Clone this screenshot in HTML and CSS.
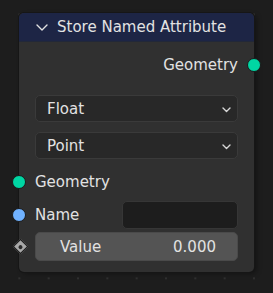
FILE: index.html
```html
<!DOCTYPE html>
<html lang="en">
<head>
    <meta charset="UTF-8">
    <meta name="viewport" content="width=device-width, initial-scale=1.0">
    <title>Store Named Attribute</title>
    <link rel="stylesheet" href="styles.css">
</head>
<body>
    <div class="node">
        <!-- 标题栏 -->
        <div class="node-header">
            <svg class="collapse-icon" viewBox="0 0 12 7" fill="none" stroke="currentColor" stroke-width="1.4" stroke-linecap="round" stroke-linejoin="round">
                <polyline points="1,1 6,6 11,1"></polyline>
            </svg>
            <span>Store Named Attribute</span>
        </div>

        <div class="node-body">
            <!-- 输出 -->
            <div class="row row-output">
                <span>Geometry</span>
                <span class="socket socket-geo socket-out"></span>
            </div>

            <!-- 下拉选项 -->
            <div class="dropdown">
                <span>Float</span>
                <svg class="drop-icon" viewBox="0 0 9 6" fill="none" stroke="currentColor" stroke-width="1.4" stroke-linecap="round" stroke-linejoin="round">
                    <polyline points="1,1 4.5,4.5 8,1"></polyline>
                </svg>
            </div>
            <div class="dropdown dropdown-second">
                <span>Point</span>
                <svg class="drop-icon" viewBox="0 0 9 6" fill="none" stroke="currentColor" stroke-width="1.4" stroke-linecap="round" stroke-linejoin="round">
                    <polyline points="1,1 4.5,4.5 8,1"></polyline>
                </svg>
            </div>

            <!-- 输入 -->
            <div class="row row-input">
                <span class="socket socket-geo socket-in"></span>
                <span>Geometry</span>
            </div>
            <div class="row row-name">
                <span class="socket socket-string socket-in"></span>
                <span class="name-label">Name</span>
                <div class="text-field"></div>
            </div>
            <div class="row row-value">
                <span class="socket-diamond"></span>
                <div class="slider">
                    <span>Value</span>
                    <span>0.000</span>
                </div>
            </div>
        </div>
    </div>
</body>
</html>
```

FILE: styles.css
```css
body {
    margin: 0;
    padding: 13px 0 0 19px;
    height: 293px;
    box-sizing: border-box;
    background-color: #1d1d1d;
    background-image: radial-gradient(circle, #303030 0.9px, transparent 1.4px);
    background-size: 29.33px 29.33px;
    background-position: 4.7px 263.7px;
    font-family: 'DejaVu Sans', sans-serif;
    font-size: 15px;
    color: #e2e2e2;
    overflow: hidden;
}

.node {
    width: 235px;
    background-color: #303030;
    border-radius: 5px;
    box-shadow: 0 0 0 1px #161616, 3px 2px 5px rgba(0,0,0,0.35);
}

/* 标题栏 */
.node-header {
    height: 29px;
    display: flex;
    align-items: center;
    padding-left: 17px;
    background-color: #1d2545;
    border-radius: 5px 5px 0 0;
    border-bottom: 1px solid #222838;
    box-sizing: border-box;
    color: #e2e2e2;
}

.collapse-icon {
    width: 12px;
    height: 7px;
    margin-right: 9px;
    margin-top: 1px;
}

.node-body {
    padding: 12px 16px 11px 16px;
    display: flex;
    flex-direction: column;
}

.row {
    position: relative;
    display: flex;
    align-items: center;
}

.row-output {
    height: 22px;
    justify-content: flex-end;
    margin-bottom: 19px;
}

/* 插槽 */
.socket {
    position: absolute;
    width: 12px;
    height: 12px;
    border-radius: 50%;
    border: 1px solid #1a1a1a;
    top: 50%;
    margin-top: -7px;
}

.socket-out {
    right: -23px;
}

.socket-in {
    left: -23px;
}

.socket-geo {
    background-color: #00d6a3;
}

.socket-string {
    background-color: #70b2ff;
}

.socket-diamond {
    position: absolute;
    left: -20.5px;
    top: 50%;
    width: 9px;
    height: 9px;
    margin-top: -5.5px;
    background-color: #a8a8a8;
    transform: rotate(45deg);
    border: 1px solid #1a1a1a;
}

.socket-diamond::after {
    content: "";
    position: absolute;
    left: 2.5px;
    top: 2.5px;
    width: 4px;
    height: 4px;
    border-radius: 50%;
    background-color: #2a2a2a;
}

/* 下拉菜单 */
.dropdown {
    height: 27px;
    box-sizing: border-box;
    display: flex;
    align-items: center;
    justify-content: space-between;
    padding: 0 6px 0 11px;
    background-color: #282828;
    border: 1px solid #3a3a3a;
    border-radius: 5px;
}

.dropdown-second {
    margin-top: 10px;
    margin-bottom: 12px;
}

.drop-icon {
    width: 9px;
    height: 6px;
    color: #d8d8d8;
    margin-top: 2px;
}

.row-input {
    height: 22px;
    margin-bottom: 8px;
}

.row-name {
    height: 28px;
}

.name-label {
    flex: 1;
}

.text-field {
    width: 116px;
    height: 28px;
    box-sizing: border-box;
    background-color: #1d1d1d;
    border: 1px solid #363636;
    border-radius: 5px;
}

.row-value {
    margin-top: 3px;
}

.slider {
    flex: 1;
    height: 29px;
    box-sizing: border-box;
    display: flex;
    align-items: center;
    justify-content: space-between;
    padding: 0 21px 0 24px;
    background-color: #545454;
    border: 1px solid #4a4a4a;
    border-radius: 5px;
}
```
